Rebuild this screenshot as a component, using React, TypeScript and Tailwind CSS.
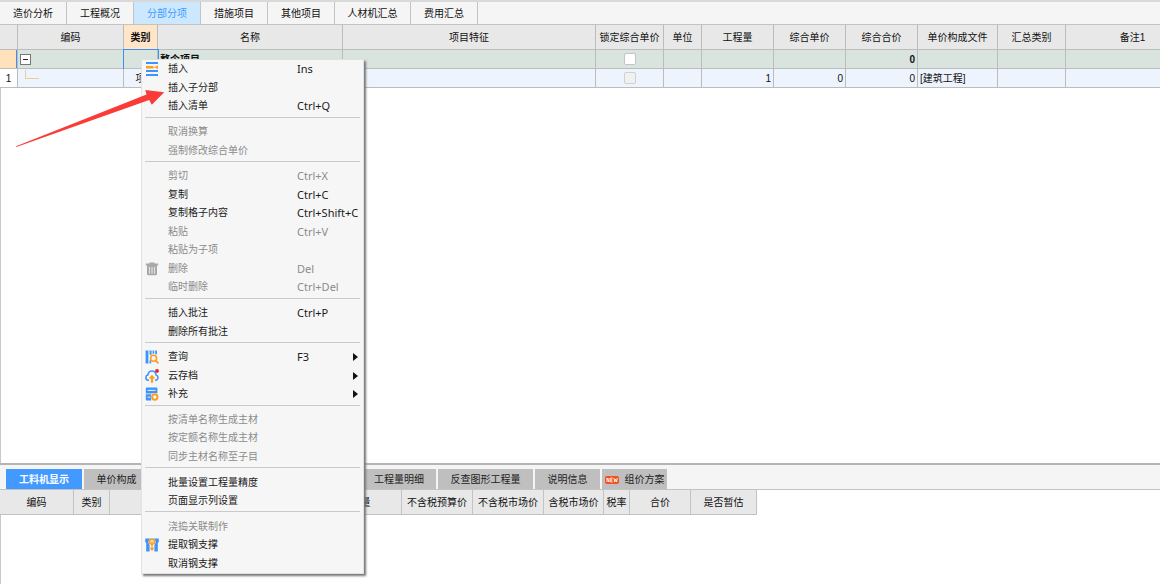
import type { ReactNode } from "react";
import { clsx } from "clsx";

const tabs = [
  { title: "造价分析", width: "w-[67px]" },
  { title: "工程概况", width: "w-[67px]" },
  { title: "分部分项", width: "w-[67px]", active: true },
  { title: "措施项目", width: "w-[67px]" },
  { title: "其他项目", width: "w-[67px]" },
  { title: "人材机汇总", width: "w-[76px]" },
  { title: "费用汇总", width: "w-[67px]" },
];

const columns = [
  { title: "", width: "w-[18px]" },
  { title: "编码", width: "w-[106px]" },
  { title: "类别", width: "w-[34px]", active: true },
  { title: "名称", width: "w-[185px]" },
  { title: "项目特征", width: "w-[253px]" },
  { title: "锁定综合单价", width: "w-[68px]" },
  { title: "单位", width: "w-[38px]" },
  { title: "工程量", width: "w-[72px]" },
  { title: "综合单价", width: "w-[72px]" },
  { title: "综合合价", width: "w-[72px]" },
  { title: "单价构成文件", width: "w-[80px]" },
  { title: "汇总类别", width: "w-[68px]" },
  { title: "备注1", width: "w-[134px]" },
];

const detailTabs = [
  { title: "工料机显示", width: "w-[76px]", active: true },
  { title: "单价构成", width: "w-[65px]" },
  { title: "", width: "w-[209px]" },
  { title: "工程量明细", width: "w-[74px]" },
  { title: "反查图形工程量", width: "w-[95px]" },
  { title: "说明信息", width: "w-[65px]" },
  { title: "组价方案", width: "w-[65px]", isNew: true },
];

const detailColumns = [
  { title: "编码", width: "w-[74px]" },
  { title: "类别", width: "w-[36px]" },
  { title: "", width: "w-[210px]" },
  { title: "数量", width: "w-[82px]" },
  { title: "不含税预算价", width: "w-[71px]" },
  { title: "不含税市场价", width: "w-[71px]" },
  { title: "含税市场价", width: "w-[60px]" },
  { title: "税率", width: "w-[26px]" },
  { title: "合价", width: "w-[61px]" },
  { title: "是否暂估", width: "w-[66px]" },
];

type MenuItem = {
  title: string;
  shortcut?: string;
  icon?: ReactNode;
  disabled?: boolean;
  submenu?: boolean;
};

const menuGroups: MenuItem[][] = [
  [
    { title: "插入", shortcut: "Ins", icon: <InsertIcon /> },
    { title: "插入子分部" },
    { title: "插入清单", shortcut: "Ctrl+Q" },
  ],
  [
    { title: "取消换算", disabled: true },
    { title: "强制修改综合单价", disabled: true },
  ],
  [
    { title: "剪切", shortcut: "Ctrl+X", disabled: true },
    { title: "复制", shortcut: "Ctrl+C" },
    { title: "复制格子内容", shortcut: "Ctrl+Shift+C" },
    { title: "粘贴", shortcut: "Ctrl+V", disabled: true },
    { title: "粘贴为子项", disabled: true },
    { title: "删除", shortcut: "Del", icon: <TrashIcon />, disabled: true },
    { title: "临时删除", shortcut: "Ctrl+Del", disabled: true },
  ],
  [
    { title: "插入批注", shortcut: "Ctrl+P" },
    { title: "删除所有批注" },
  ],
  [
    { title: "查询", shortcut: "F3", icon: <QueryIcon />, submenu: true },
    { title: "云存档", icon: <CloudIcon />, submenu: true },
    { title: "补充", icon: <SupplementIcon />, submenu: true },
  ],
  [
    { title: "按清单名称生成主材", disabled: true },
    { title: "按定额名称生成主材", disabled: true },
    { title: "同步主材名称至子目", disabled: true },
  ],
  [{ title: "批量设置工程量精度" }, { title: "页面显示列设置" }],
  [
    { title: "浇捣关联制作", disabled: true },
    { title: "提取钢支撑", icon: <SteelIcon /> },
    { title: "取消钢支撑" },
  ],
];

function InsertIcon() {
  return (
    <svg viewBox="0 0 14 14" className="h-3.5 w-3.5">
      <path d="M1 0h12v2H1zM1 8h12v2H1zM1 12h12v2H1z" fill="#3d94fb" />
      <path d="M1 4h7.4v2.6H1zM13 3.2v4L9.6 5.3z" fill="#ff9c1a" />
      <path d="M8.4 4.8H11v1H8.4z" fill="#f9b75c" />
    </svg>
  );
}

function TrashIcon() {
  return (
    <svg viewBox="0 0 14 14" className="h-3.5 w-3.5">
      <path
        d="M4.4 1.6V.4h5.2v1.2h3.6v1.8H.8V1.6zM2 3.4h10v8.6c0 .8-.5 1.3-1.3 1.3H3.3c-.8 0-1.3-.5-1.3-1.3z"
        fill="#a9a9a9"
      />
      <path d="M4.6 5v6.6M7 5v6.6M9.4 5v6.6" stroke="#efefef" strokeWidth=".9" />
    </svg>
  );
}

function QueryIcon() {
  return (
    <svg viewBox="0 0 14 14" className="h-3.5 w-3.5">
      <path
        d="M.6.4h2.8v13.2H.6zM4.6.4h2v4.4h-2zM4.6 10.2h1.6v3.4H4.6zM7.6.4h1.6v3.4H7.6zM10.2.4h1.8v3.8h-1.8z"
        fill="#3d94fb"
      />
      <circle cx="8.6" cy="8.2" r="3" fill="none" stroke="#ff9c1a" strokeWidth="1.6" />
      <path d="m10.6 10.4 2.8 3" stroke="#ff9c1a" strokeWidth="1.8" />
    </svg>
  );
}

function CloudIcon() {
  return (
    <svg viewBox="0 0 14 14" className="h-3.5 w-3.5">
      <path
        d="M4 11.2H3.2a2.6 2.6 0 0 1-.4-5.1C3.2 3.6 4.8 2 7 2s3.8 1.6 4.1 4a2.7 2.7 0 0 1-.2 5.2H10"
        fill="none"
        stroke="#3d94fb"
        strokeWidth="1.6"
      />
      <path d="M7 5.8 10.4 9.4H8.1v4.4H5.9V9.4H3.6z" fill="#ff9c1a" />
      <circle cx="12" cy="1.9" r="1.9" fill="#f5141e" />
    </svg>
  );
}

function SupplementIcon() {
  return (
    <svg viewBox="0 0 14 14" className="h-3.5 w-3.5">
      <path
        d="M2 .4h9.4c.6 0 1 .4 1 1v5H.8v-5c0-.6.5-1 1.2-1zM.8 7.2h5.4v6.2H2c-.7 0-1.2-.4-1.2-1z"
        fill="#3d94fb"
      />
      <path d="M2.6 3.4h8M2.6 10.2h2.6" stroke="#fff" strokeWidth=".9" />
      <circle cx="9.8" cy="10" r="4" fill="#f6f6f6" />
      <circle cx="9.8" cy="10" r="2.7" fill="none" stroke="#ff9c1a" strokeWidth="1.9" />
    </svg>
  );
}

function SteelIcon() {
  return (
    <svg viewBox="0 0 14 14" className="h-3.5 w-3.5">
      <path d="M.2.6h13.6v3.8H.2zM1.2 4.4h3.4v9.2H1.2zM9.4 4.4h3.4v9.2H9.4z" fill="#3d94fb" />
      <circle cx="7" cy="4" r="3.5" fill="#f6f6f6" />
      <circle cx="7" cy="3.8" r="2.5" fill="none" stroke="#ff9c1a" strokeWidth="1.6" />
      <path d="M7 3v9.6M5.4 9.8 7 12l1.6-2.2" fill="none" stroke="#ff9c1a" strokeWidth="1.3" />
    </svg>
  );
}

function ProjectTabs() {
  return (
    <nav className="flex h-[25px] border-t-2 border-b border-t-[#d9d9d9] border-b-[#c3c3c3] bg-[#f5f5f5]">
      {tabs.map((tab) => (
        <button
          key={tab.title}
          type="button"
          className={clsx(
            "shrink-0 border-r border-[#c3c3c3] pt-0.5 text-center",
            tab.width,
            tab.active ? "bg-[#cce8ff] text-[#3d9bff]" : "text-[#111]"
          )}
        >
          {tab.title}
        </button>
      ))}
    </nav>
  );
}

function ItemsTable() {
  return (
    <div className="overflow-hidden">
      <table className="w-full min-w-[1200px] table-fixed border-separate border-spacing-0 whitespace-nowrap [&_span]:block [&_span]:px-0.5 [&_span]:pt-0.5 [&_td]:border-r [&_td]:border-b [&_td]:border-[#bcbcbc] [&_td]:p-0 [&_th]:border-r [&_th]:border-b [&_th]:border-[#bcbcbc] [&_th]:p-0 [&_th]:pt-0.5">
        <thead>
          <tr className="h-[25px] bg-[#e8e8e8]">
            {columns.map((col) => (
              <th
                key={col.title}
                className={clsx(
                  col.width,
                  col.active ? "bg-[#ffe6c8] font-bold" : "font-normal"
                )}
              >
                {col.title}
              </th>
            ))}
          </tr>
        </thead>
        <tbody>
          <tr className="h-[19px] bg-[#dae4df] font-bold">
            <td className="bg-[#ffe2bc] shadow-[inset_-1px_0_0_#3d8ff0]" />
            <td>
              <button
                type="button"
                aria-label="折叠"
                className="ml-0.5 flex h-[11px] w-[11px] items-center justify-center border border-[#777] bg-white"
              >
                <i className="h-px w-[5px] bg-[#222]" />
              </button>
            </td>
            <td className="shadow-[0_0_0_1px_#3d8ff0]" />
            <td>
              <span>整个项目</span>
            </td>
            <td />
            <td>
              <input
                type="checkbox"
                aria-label="锁定整个项目综合单价"
                className="mx-auto block h-3 w-3 appearance-none rounded-xs border border-[#c4c4c4] bg-white"
              />
            </td>
            <td />
            <td />
            <td />
            <td className="text-right">
              <span>0</span>
            </td>
            <td />
            <td />
            <td />
          </tr>
          <tr className="h-[19px] bg-[#edf4fe]">
            <td className="bg-white text-center">
              <span>1</span>
            </td>
            <td>
              <div className="mb-2 ml-[7px] h-[9px] w-3.5 border-b border-l border-[#e8cd94]" />
            </td>
            <td className="text-center">
              <span>项</span>
            </td>
            <td />
            <td />
            <td>
              <input
                type="checkbox"
                disabled
                aria-label="锁定综合单价"
                className="mx-auto block h-3 w-3 appearance-none rounded-xs border border-[#d0d0d0] bg-[#f1f1f1]"
              />
            </td>
            <td />
            <td className="text-right">
              <span>1</span>
            </td>
            <td className="text-right">
              <span>0</span>
            </td>
            <td className="text-right">
              <span>0</span>
            </td>
            <td>
              <span>[建筑工程]</span>
            </td>
            <td />
            <td />
          </tr>
        </tbody>
      </table>
    </div>
  );
}

function DetailPanel() {
  return (
    <section className="h-[121px] shrink-0 overflow-hidden border-t-2 border-[#b4b4b4] shadow-[inset_1px_0_0_#c8c8c8]">
      <nav className="flex h-[25px] items-end gap-0.5 border-b border-[#c3c3c3] bg-[#f5f5f5] pl-1.5">
        {detailTabs.map((tab) =>
          tab.title ? (
            <button
              key={tab.title}
              type="button"
              className={clsx(
                "flex h-5 shrink-0 items-center justify-center pt-0.5",
                tab.width,
                tab.active ? "bg-[#4299ff] font-bold text-white" : "bg-[#bfbfbf] text-[#222]"
              )}
            >
              {tab.isNew && <NewBadge />}
              {tab.title}
            </button>
          ) : (
            <div key="blank" className={clsx("h-5 shrink-0 bg-[#bfbfbf]", tab.width)} />
          )
        )}
      </nav>
      <table className="w-[757px] table-fixed border-separate border-spacing-0 whitespace-nowrap">
        <thead>
          <tr className="h-[25px] bg-[#e8e8e8]">
            {detailColumns.map((col) => (
              <th
                key={col.title}
                className={clsx(
                  "border-r border-b border-[#c3c3c3] p-0 pt-0.5 font-normal",
                  col.width
                )}
              >
                {col.title}
              </th>
            ))}
          </tr>
        </thead>
      </table>
    </section>
  );
}

function NewBadge() {
  return (
    <svg viewBox="0 0 14 8" className="mr-1.5 h-2 w-3.5 shrink-0">
      <rect width="14" height="8" rx="2" fill="#f4511e" />
      <path
        d="M2 6V2l2 4V2M7.6 2H5.8v4h1.8M5.8 4h1.6M9 2l.7 4 .9-3 .9 3 .9-4"
        fill="none"
        stroke="#fff"
        strokeWidth=".9"
      />
    </svg>
  );
}

function ContextMenu() {
  return (
    <div
      role="menu"
      className="absolute top-[59px] left-[141px] flex h-[515px] w-[223px] flex-col border border-[#e2e2e2] bg-[#f6f6f6] shadow-[2px_2px_2px_#777]"
    >
      {menuGroups.map((group, index) => (
        <div key={group[0].title} className="contents">
          {index > 0 && <hr className="mx-[3px] mt-px mb-[5px] border-[#cacaca]" />}
          {group.map((item) => (
            <button
              key={item.title}
              type="button"
              role="menuitem"
              disabled={item.disabled}
              className={clsx(
                "flex min-h-0 flex-1 items-center pr-[5px] pl-[3px] text-left whitespace-nowrap",
                item.disabled ? "text-[#8b8b8b]" : "text-[#1a1a1a]"
              )}
            >
              <span className="w-[23px] shrink-0">{item.icon}</span>
              <span className="w-[129px] shrink-0">{item.title}</span>
              <span className="font-['Noto_Sans',sans-serif] text-[11px]">{item.shortcut}</span>
              {item.submenu && (
                <svg viewBox="0 0 5 8" className="ml-auto h-2 w-[5px]">
                  <path d="M0 0l5 4-5 4z" fill="#111" />
                </svg>
              )}
            </button>
          ))}
        </div>
      ))}
    </div>
  );
}

function PointerArrow() {
  return (
    <svg
      viewBox="0 0 150 60"
      className="pointer-events-none absolute top-[89px] left-[15px] h-[60px] w-[150px]"
    >
      <path d="M1 57.2 131.5 5.6 130.3 1 149.2 3.2 136.8 15.8 134.2 11 1.4 58z" fill="#fb3b38" />
    </svg>
  );
}

export default function App() {
  return (
    <div className="relative flex min-h-screen flex-col overflow-hidden bg-white font-['Liberation_Sans','Noto_Sans_CJK_SC',sans-serif] text-[10px] leading-4 text-[#111]">
      <ProjectTabs />
      <main className="flex-1 shadow-[inset_1px_0_0_#c8c8c8]">
        <ItemsTable />
      </main>
      <DetailPanel />
      <ContextMenu />
      <PointerArrow />
    </div>
  );
}
